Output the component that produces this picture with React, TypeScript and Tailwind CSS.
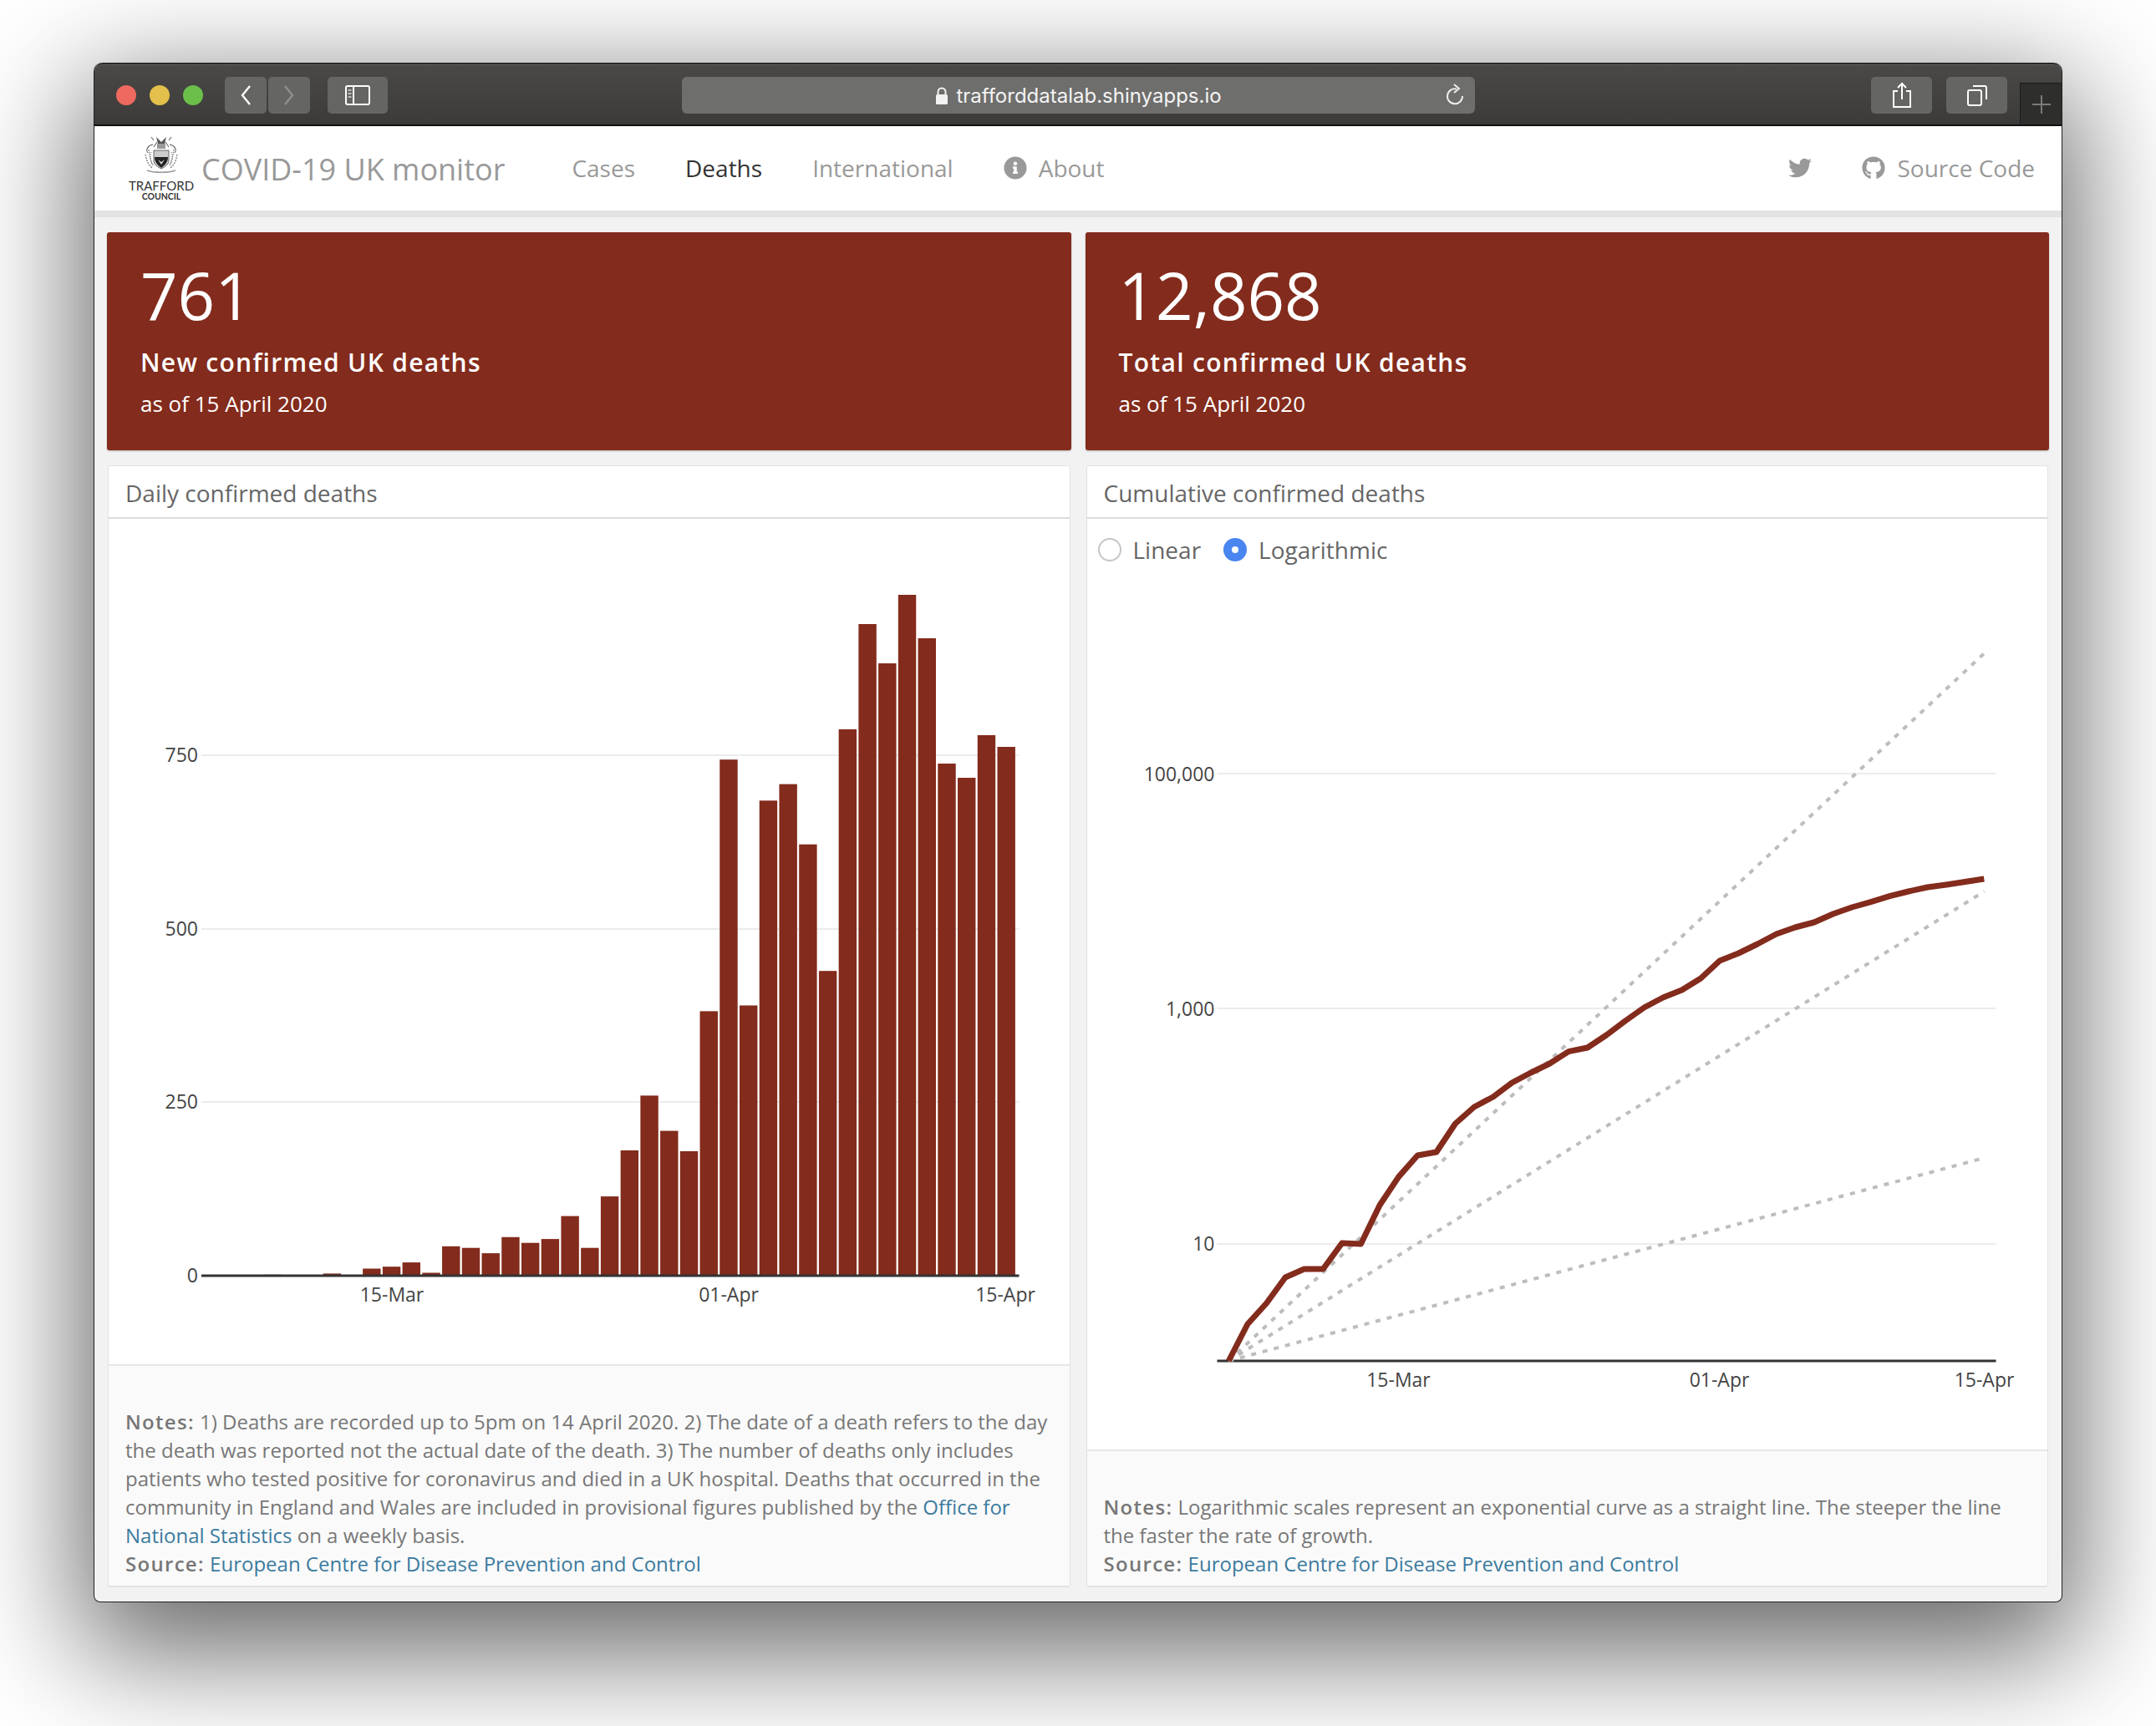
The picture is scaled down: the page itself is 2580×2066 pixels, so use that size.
import { FaGithub, FaInfoCircle, FaTwitter } from 'react-icons/fa';

const dailyTops = [
  1525.8, 0, 0, 1524.4, 1526.7, 1518.5, 1516.2, 1511.1, 1523.5, 1491.8, 1493.7, 1500.1, 1480.8, 1487.7, 1483.1, 1455.6,
  1493.7, 1432.1, 1377, 1311.4, 1353.6, 1378, 1210.4, 909.2, 1203.5, 958.3, 938.6, 1010.7, 1162.2, 873, 747, 794, 712,
  764, 914, 931, 880, 894,
];

const cumulative = [
  1629, 1585, 1560, 1529, 1519, 1519, 1488, 1489, 1442.5, 1408.6, 1383, 1379, 1345, 1325, 1313, 1296, 1284, 1273, 1258.6,
  1254, 1239, 1222, 1206, 1194, 1185, 1171, 1150, 1141, 1130, 1118, 1110, 1104, 1094, 1086, 1079.6, 1072.7, 1067, 1062,
  1059, 1055.5, 1052,
];

const RED = '#832b1c';

function DailyChart() {
  return (
    <svg viewBox="130 621 1149.5 1013" className="block w-full h-[1013px]">
      {[904, 1112, 1319].map((y) => (
        <line key={y} x1={241} x2={1219.5} y1={y} y2={y} stroke="#ececec" strokeWidth={2} />
      ))}
      {dailyTops.map((top, i) =>
        top === 0 ? null : (
          <rect key={i} x={1193.5 - (37 - i) * 23.73} y={top} width={21.4} height={1527 - top} fill={RED} />
        ),
      )}
      <line x1={241} x2={1219.5} y1={1527} y2={1527} stroke="#333" strokeWidth={3} />
      <g fontFamily="'Open Sans', sans-serif" fontSize={23} fill="#444" textAnchor="end">
        <text x={237} y={912}>750</text>
        <text x={237} y={1120}>500</text>
        <text x={237} y={1327}>250</text>
        <text x={237} y={1535}>0</text>
      </g>
      <g fontFamily="'Open Sans', sans-serif" fontSize={23} fill="#444" textAnchor="middle">
        <text x={469} y={1558}>15-Mar</text>
        <text x={872} y={1558}>01-Apr</text>
        <text x={1203} y={1558}>15-Apr</text>
      </g>
    </svg>
  );
}

function CumulativeChart() {
  const points = cumulative.map((y, i) => `${1469.8 + i * 22.6},${y}`).join(' ');
  return (
    <svg viewBox="1300.5 695 1149.5 1042" className="block w-full h-[1042px]">
      {[926, 1207, 1489].map((y) => (
        <line key={y} x1={1456} x2={2388} y1={y} y2={y} stroke="#ececec" strokeWidth={2} />
      ))}
      <line x1={1456} x2={2388} y1={1629} y2={1629} stroke="#333" strokeWidth={3} />
      {[782, 1067, 1386].map((y) => (
        <line
          key={y}
          x1={1469.8}
          y1={1629}
          x2={2374}
          y2={y}
          stroke="#bdbdbd"
          strokeWidth={4}
          strokeDasharray="6 8"
        />
      ))}
      <polyline points={points} fill="none" stroke={RED} strokeWidth={7} strokeLinejoin="round" />
      <g fontFamily="'Open Sans', sans-serif" fontSize={23} fill="#444" textAnchor="end">
        <text x={1453} y={935}>100,000</text>
        <text x={1453} y={1216}>1,000</text>
        <text x={1453} y={1497}>10</text>
      </g>
      <g fontFamily="'Open Sans', sans-serif" fontSize={23} fill="#444" textAnchor="middle">
        <text x={1673} y={1660}>15-Mar</text>
        <text x={2057} y={1660}>01-Apr</text>
        <text x={2374} y={1660}>15-Apr</text>
      </g>
    </svg>
  );
}

function Crest() {
  return (
    <svg viewBox="0 0 50 48" className="w-[50px] h-[48px] block">
      <g fill="none" stroke="#666" strokeWidth={1.1}>
        <path d="M9 21c-3-4 0-9 6-10M41 21c3-4 0-9-6-10" />
        <path d="M6 23c1 6 3 12 8 16M44 23c-1 6-3 12-8 16" strokeDasharray="2 1.2" />
        <path d="M10 17c1 7 2 14 5 19M40 17c-1 7-2 14-5 19" strokeDasharray="1.5 1.2" />
        <path d="M13 20c-2 5-1 11 2 15M37 20c2 5 1 11-2 15" strokeDasharray="1 1.5" />
        <path d="M8 42c8 3 26 3 34 0" strokeWidth={1.6} stroke="#999" />
        <path d="M16 6l-3-4M34 6l3-4M20 8l-4 6M30 8l4 6" />
      </g>
      <path d="M19 2l6 6 6-6-2 8h-8z" fill="#555" />
      <path d="M20 10h10v6H20z" fill="#999" />
      <path d="M16 18h18v12c0 5-5 8-9 10-4-2-9-5-9-10z" fill="#ccc" stroke="#666" />
      <path d="M17 26h16c0 6-4 10-8 13-4-3-8-7-8-13z" fill="#222" />
      <path d="M21 29l4 3 4-3-4 6z" fill="#ddd" />
    </svg>
  );
}

function ToolButton({ className, children }: { className: string; children: React.ReactNode }) {
  return (
    <div className={`h-[44px] bg-[#656563] rounded-[5px] flex items-center justify-center ${className}`}>{children}</div>
  );
}

function TitleBar() {
  return (
    <div className="relative h-[76px] shrink-0 flex items-center pt-[1px] rounded-t-[10px] border-t-2 border-b-2 border-t-[#2a2a2a] border-b-[#111] bg-gradient-to-b from-[#4a4947] to-[#3c3b39] shadow-[inset_0_1px_0_#625f5c]">
      <div className="flex items-center gap-[16px] ml-[26px]">
        <div className="w-[24px] h-[24px] rounded-full bg-[#ee6a5f]" />
        <div className="w-[24px] h-[24px] rounded-full bg-[#e3bf4b]" />
        <div className="w-[24px] h-[24px] rounded-full bg-[#6cbf4a]" />
      </div>
      <div className="flex items-center gap-[2px] ml-[26px]">
        <ToolButton className="w-[50px]">
          <svg width="16" height="26" viewBox="0 0 16 26" fill="none" stroke="#fff" strokeWidth="2.4">
            <path d="M13 2L4 13l9 11" />
          </svg>
        </ToolButton>
        <ToolButton className="w-[50px]">
          <svg width="16" height="26" viewBox="0 0 16 26" fill="none" stroke="#8f8f8d" strokeWidth="2.4">
            <path d="M3 2l9 11-9 11" />
          </svg>
        </ToolButton>
      </div>
      <ToolButton className="w-[72px] ml-[21px]">
        <svg width="30" height="24" viewBox="0 0 30 24" fill="none" stroke="#fff" strokeWidth="2">
          <rect x="1" y="1" width="28" height="22" rx="2" />
          <path d="M10 1v22" />
          <path d="M3.5 6h4M3.5 10h4M3.5 14h4" stroke="#bbb" />
        </svg>
      </ToolButton>
      <div className="relative ml-[352px] w-[949px] h-[44px] bg-[#6e6e6c] rounded-[6px] flex items-center justify-center pt-[2px] text-[#f4f4f4] text-[24px] font-['Inter',sans-serif]">
        <svg width="16" height="22" viewBox="0 0 16 22" className="mr-[9px]" fill="#f2f2f2">
          <path d="M3.5 9V6a4.5 4.5 0 019 0v3" fill="none" stroke="#f2f2f2" strokeWidth="2" />
          <rect x="1" y="9" width="14" height="12" rx="1.5" />
        </svg>
        <span>trafforddatalab.shinyapps.io</span>
        <svg width="24" height="28" viewBox="0 0 24 28" fill="none" stroke="#ededed" strokeWidth="2" className="absolute right-[12px] top-[8px]">
          <path d="M14 6.5A9 9 0 1021 15" />
          <path d="M11 1l6 5-6 5" />
        </svg>
      </div>
      <ToolButton className="w-[73px] ml-[474px]">
        <svg width="24" height="32" viewBox="0 0 24 32" fill="none" stroke="#fff" strokeWidth="2">
          <path d="M7 11H2v19h20V11h-5M12 21V2M7 7l5-5 5 5" />
        </svg>
      </ToolButton>
      <ToolButton className="w-[73px] ml-[17px]">
        <svg width="26" height="26" viewBox="0 0 26 26" fill="none" stroke="#fff" strokeWidth="2">
          <rect x="2" y="7" width="16" height="18" rx="2" />
          <path d="M8 2h14a2 2 0 012 2v14" />
        </svg>
      </ToolButton>
      <div className="absolute right-0 bottom-0 w-[50px] h-[50px] bg-[#2e2e2d] border-l border-t border-[#1c1c1c] flex items-center justify-center">
        <svg width="24" height="24" viewBox="0 0 24 24" stroke="#7b7b7a" strokeWidth="2">
          <path d="M12 1v22M1 12h22" />
        </svg>
      </div>
    </div>
  );
}

function NavBar() {
  return (
    <div className="h-[109px] shrink-0 bg-white border-b-[8px] border-[#e3e3e3] flex items-center text-[#999] font-['Open_Sans',sans-serif]">
      <div className="w-[80px] ml-[40px] flex flex-col items-center">
        <Crest />
        <div className="font-['Lato',sans-serif] text-[#333] text-[15px] leading-[14px] mt-[5px]">TRAFFORD</div>
        <div className="font-['Lato',sans-serif] text-[#333] text-[10.5px] leading-[12px] font-bold">COUNCIL</div>
      </div>
      <div className="ml-[8px] pt-[2px] text-[36px] leading-none">COVID-19 UK monitor</div>
      <div className="ml-[80px] mb-[2px] text-[28px] leading-none">Cases</div>
      <div className="ml-[60px] mb-[2px] text-[28px] leading-none text-[#333]">Deaths</div>
      <div className="ml-[60px] mb-[2px] text-[28px] leading-none">International</div>
      <div className="ml-[60px] mb-[2px] flex items-center gap-[14px] text-[28px] leading-none">
        <FaInfoCircle size={28} />
        <span>About</span>
      </div>
      <div className="ml-auto mr-[32px] mb-[2px] flex items-center text-[28px] leading-none">
        <FaTwitter size={28} />
        <FaGithub size={28} className="ml-[60px] mr-[14px]" />
        <span>Source Code</span>
      </div>
    </div>
  );
}

function ValueBox({ value, label }: { value: string; label: string }) {
  return (
    <div className="h-[261px] bg-[#832b1c] rounded-[3px] pl-[40px] pt-[23px] text-white shadow-[0_1px_2px_rgba(0,0,0,0.25)]">
      <div className="text-[78px] leading-[104px]">{value}</div>
      <div className="mt-[6px] text-[30px] leading-[46px] font-semibold tracking-[1.3px]">{label}</div>
      <div className="mt-[8px] text-[26px] leading-[36px]">as of 15 April 2020</div>
    </div>
  );
}

function Panel({ title, children, footer }: { title: string; children: React.ReactNode; footer: React.ReactNode }) {
  return (
    <div className="mx-[1px] bg-white rounded-[3px] border border-b-2 border-[#e2e2e2] flex flex-col h-[1343px]">
      <div className="h-[63px] shrink-0 border-b-2 border-[#dcdcdc] pl-[20px] pt-[3px] flex items-center text-[28px] text-[#666]">
        {title}
      </div>
      <div className="flex-1 min-h-0">{children}</div>
      <div className="bg-[#fafafa] border-t-2 border-[#e6e6e6] px-[20px] pb-[9px] text-[24px] leading-[34px] text-[#777]">
        {footer}
      </div>
    </div>
  );
}

function Link({ children }: { children: React.ReactNode }) {
  return <span className="text-[#3c7b9e]">{children}</span>;
}

function Label({ children }: { children: React.ReactNode }) {
  return <b className="font-semibold tracking-[1.3px]">{children}</b>;
}

function Radio({ label, checked }: { label: string; checked?: boolean }) {
  return (
    <div className="flex items-center gap-[14px] text-[28px] text-[#666]">
      {checked ? (
        <div className="w-[28px] h-[28px] rounded-full bg-[#4a86f0] flex items-center justify-center">
          <div className="w-[8px] h-[8px] rounded-full bg-white" />
        </div>
      ) : (
        <div className="w-[28px] h-[28px] rounded-full border-2 border-[#c6c6c6] bg-white" />
      )}
      <span>{label}</span>
    </div>
  );
}

export default function App() {
  return (
    <div className="w-[2580px] h-[2066px] bg-white pl-[112px] pt-[75px] overflow-hidden">
      <div className="w-[2356px] h-[1843px] flex flex-col rounded-t-[10px] rounded-b-[8px] bg-[#f2f2f2] border-x border-b border-[#222] shadow-[0_44px_140px_16px_rgba(0,0,0,0.6)] font-['Open_Sans',sans-serif]">
        <TitleBar />
        <NavBar />
        <div className="grid grid-cols-2 gap-x-[17px] gap-y-[18px] pt-[18px] px-[15px]">
          <ValueBox value="761" label="New confirmed UK deaths" />
          <ValueBox value="12,868" label="Total confirmed UK deaths" />
          <Panel
            title="Daily confirmed deaths"
            footer={
              <div className="pt-[50px]">
                <Label>Notes:</Label> 1) Deaths are recorded up to 5pm on 14 April 2020. 2) The date of a death refers to
                the day the death was reported not the actual date of the death. 3) The number of deaths only includes
                patients who tested positive for coronavirus and died in a UK hospital. Deaths that occurred in the
                community in England and Wales are included in provisional figures published by the{' '}
                <Link>Office for National Statistics</Link> on a weekly basis.
                <br />
                <Label>Source:</Label> <Link>European Centre for Disease Prevention and Control</Link>
              </div>
            }
          >
            <DailyChart />
          </Panel>
          <Panel
            title="Cumulative confirmed deaths"
            footer={
              <div className="pt-[50px]">
                <Label>Notes:</Label> Logarithmic scales represent an exponential curve as a straight line. The steeper
                the line the faster the rate of growth.
                <br />
                <Label>Source:</Label> <Link>European Centre for Disease Prevention and Control</Link>
              </div>
            }
          >
            <div className="h-[74px] flex items-center gap-[27px] pl-[13px]">
              <Radio label="Linear" />
              <Radio label="Logarithmic" checked />
            </div>
            <CumulativeChart />
          </Panel>
        </div>
      </div>
    </div>
  );
}
